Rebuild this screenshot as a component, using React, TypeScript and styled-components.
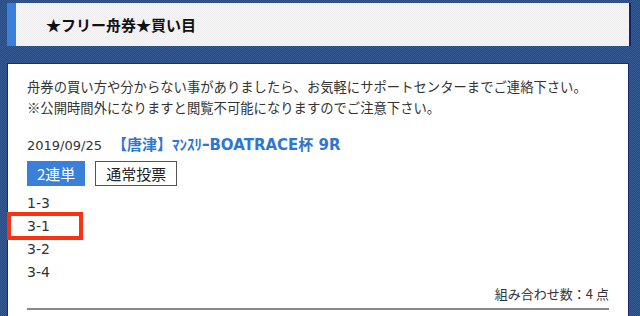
import React from "react";
import styled, { createGlobalStyle } from "styled-components";

const Global = createGlobalStyle`
  html, body {
    margin: 0;
    padding: 0;
    height: 100%;
  }
  body {
    background-color: #2f5186;
    background-image: repeating-conic-gradient(#2a4a7c 0 25%, #365a92 0 50%);
    background-size: 2px 2px;
    font-family: "Noto Sans CJK JP", "Noto Sans", sans-serif;
    overflow: hidden;
  }
`;

const latin = `"DejaVu Sans", "Noto Sans CJK JP", sans-serif`;

const Page = styled.div`
  padding: 3px 11px 0 7px;
`;

const Header = styled.div`
  height: 43px;
  box-sizing: border-box;
  display: flex;
  align-items: center;
  padding-left: 30px;
  border-left: 9px solid #3b7fdc;
  background-color: #f1f1f1;
  background-image: repeating-conic-gradient(#efefef 0 25%, #f4f4f4 0 50%);
  background-size: 2px 2px;
  box-shadow: 2px 0 0 #13246a;
`;

const HeaderTitle = styled.h1`
  margin: 0;
  font-size: 15px;
  font-weight: 700;
  color: #111;
`;

const Panel = styled.div`
  margin-top: 17px;
  background: #fff;
  border: 1px solid #1a2a78;
  border-bottom: none;
  padding: 12px 19px 0 19px;
  height: 300px;
`;

const Notice = styled.p`
  margin: 0;
  font-size: 13.33px;
  line-height: 21px;
  color: #333;
`;

const RaceRow = styled.div`
  margin-top: 16px;
  display: flex;
  align-items: baseline;
  gap: 10px;
  line-height: 23px;
`;

const RaceDate = styled.span`
  font-family: ${latin};
  font-size: 13px;
  color: #333;
`;

const RaceTitle = styled.span`
  font-family: ${latin};
  font-size: 15px;
  font-weight: 700;
  color: #2f76d2;
`;

const Tabs = styled.div`
  margin-top: 4px;
  display: flex;
  gap: 10px;
`;

const Tab = styled.span<{ $active?: boolean }>`
  height: 25px;
  box-sizing: border-box;
  display: inline-flex;
  align-items: center;
  padding: 0 ${(p) => (p.$active ? "9px" : "10px")};
  font-size: 15px;
  color: ${(p) => (p.$active ? "#fff" : "#222")};
  background: ${(p) => (p.$active ? "#3a80db" : "#fff")};
  border: 1px solid ${(p) => (p.$active ? "#3a80db" : "#555")};
`;

const Picks = styled.ul`
  list-style: none;
  margin: 6px 0 0 0;
  padding: 0;
`;

const Pick = styled.li`
  position: relative;
  font-family: ${latin};
  font-size: 14px;
  line-height: 23px;
  color: #333;
`;

const Highlight = styled.span`
  position: absolute;
  left: -20px;
  top: -3px;
  width: 76px;
  height: 28px;
  box-sizing: border-box;
  border: 4px solid #fa3210;
  pointer-events: none;
`;

const Count = styled.div`
  text-align: right;
  font-size: 13px;
  line-height: 20px;
  color: #333;
  padding-bottom: 4px;
  border-bottom: 2px solid #8a8a8a;
`;

const picks = ["1-3", "3-1", "3-2", "3-4"];

export default function App() {
  return (
    <>
      <Global />
      <Page>
        <Header>
          <HeaderTitle>★フリー舟券★買い目</HeaderTitle>
        </Header>
        <Panel>
          <Notice>
            舟券の買い方や分からない事がありましたら、お気軽にサポートセンターまでご連絡下さい。
            <br />
            ※公開時間外になりますと閲覧不可能になりますのでご注意下さい。
          </Notice>
          <RaceRow>
            <RaceDate>2019/09/25</RaceDate>
            <RaceTitle>【唐津】ﾏﾝｽﾘｰBOATRACE杯 9R</RaceTitle>
          </RaceRow>
          <Tabs>
            <Tab $active>2連単</Tab>
            <Tab>通常投票</Tab>
          </Tabs>
          <Picks>
            {picks.map((p) => (
              <Pick key={p}>
                {p}
                {p === "3-1" && <Highlight />}
              </Pick>
            ))}
          </Picks>
          <Count>組み合わせ数：4 点</Count>
        </Panel>
      </Page>
    </>
  );
}
